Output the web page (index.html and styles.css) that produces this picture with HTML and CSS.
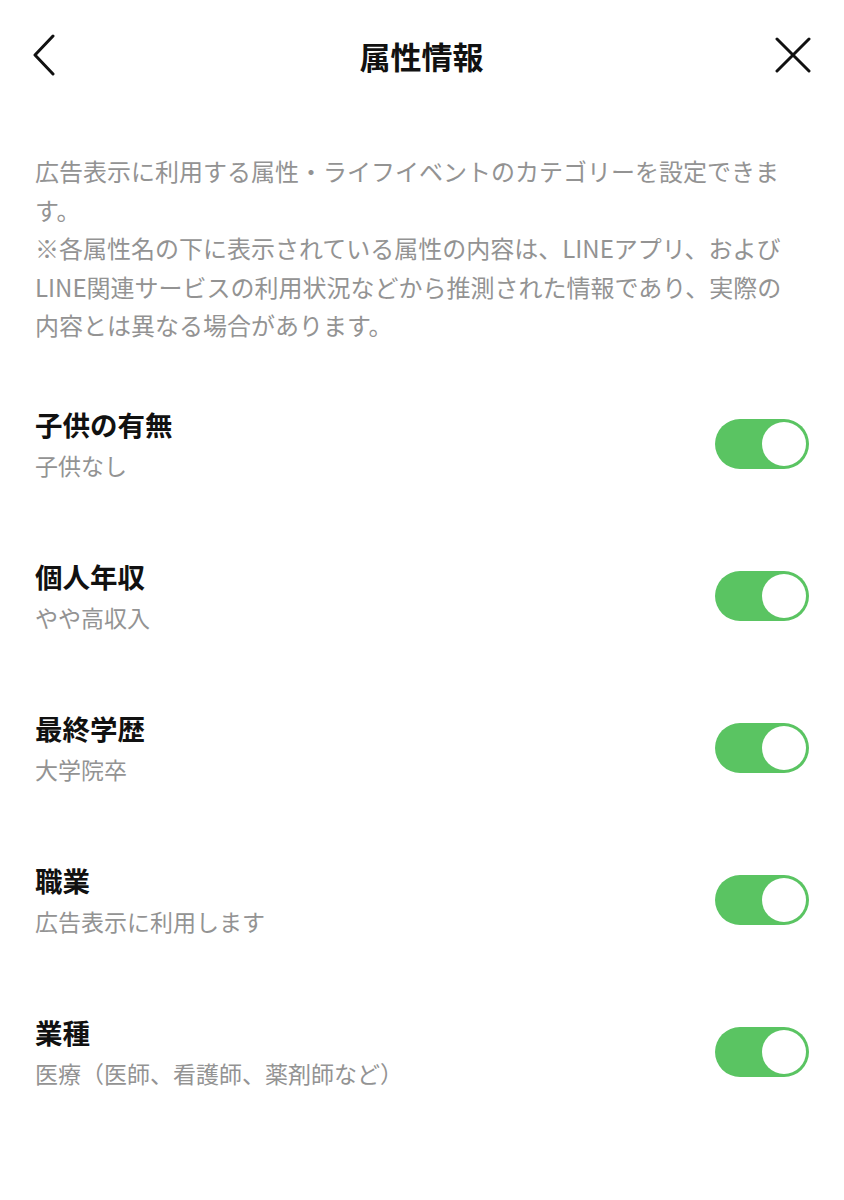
FILE: index.html
```html
<!DOCTYPE html>
<html lang="ja">
  <head>
    <meta charset="utf-8" />
    <title>属性情報</title>
    <meta name="viewport" content="width=device-width, initial-scale=1.0" />
    <link rel="stylesheet" href="styles.css">
  </head>
  <body>
    <header class="top-bar">
      <button class="icon-btn back" aria-label="戻る">
        <svg width="24" height="42" viewBox="0 0 24 42">
          <path d="M21 2 L3 21 L21 40" fill="none" stroke="#111" stroke-width="3" stroke-linecap="round" stroke-linejoin="round" />
        </svg>
      </button>
      <h1 class="title">属性情報</h1>
      <button class="icon-btn close" aria-label="閉じる">
        <svg width="36" height="36" viewBox="0 0 36 36">
          <path d="M2 2 L34 34 M34 2 L2 34" fill="none" stroke="#111" stroke-width="3" stroke-linecap="round" />
        </svg>
      </button>
    </header>

    <p class="description">
      広告表示に利用する属性・ライフイベントのカテゴリーを設定できます。<br>
      ※各属性名の下に表示されている属性の内容は、LINEアプリ、およびLINE関連サービスの利用状況などから推測された情報であり、実際の内容とは異なる場合があります。
    </p>

    <ul class="settings">
      <li class="setting">
        <div class="setting-text">
          <div class="setting-name">子供の有無</div>
          <div class="setting-value">子供なし</div>
        </div>
        <label class="switch"><input type="checkbox" checked><span class="slider"></span></label>
      </li>
      <li class="setting">
        <div class="setting-text">
          <div class="setting-name">個人年収</div>
          <div class="setting-value">やや高収入</div>
        </div>
        <label class="switch"><input type="checkbox" checked><span class="slider"></span></label>
      </li>
      <li class="setting">
        <div class="setting-text">
          <div class="setting-name">最終学歴</div>
          <div class="setting-value">大学院卒</div>
        </div>
        <label class="switch"><input type="checkbox" checked><span class="slider"></span></label>
      </li>
      <li class="setting">
        <div class="setting-text">
          <div class="setting-name">職業</div>
          <div class="setting-value">広告表示に利用します</div>
        </div>
        <label class="switch"><input type="checkbox" checked><span class="slider"></span></label>
      </li>
      <li class="setting">
        <div class="setting-text">
          <div class="setting-name">業種</div>
          <div class="setting-value">医療（医師、看護師、薬剤師など）</div>
        </div>
        <label class="switch"><input type="checkbox" checked><span class="slider"></span></label>
      </li>
    </ul>
  </body>
</html>
```

FILE: styles.css
```css
body {
  margin: 0;
  background: #fff;
  color: #111;
  font-family: "Noto Sans CJK JP", "Noto Sans", sans-serif;
}

.top-bar {
  height: 110px;
  padding: 0 33px 0 32px;
  display: grid;
  grid-template-columns: 1fr auto 1fr;
  align-items: center;
}

.icon-btn {
  padding: 0;
  border: none;
  background: none;
  display: flex;
  cursor: pointer;
}

.close {
  justify-self: end;
}

.title {
  margin: 0;
  font-size: 31px;
  font-weight: 700;
  line-height: 1;
}

.description {
  margin: 42px 54px 0 35px;
  font-size: 24px;
  line-height: 38.5px;
  color: #939393;
}

.settings {
  list-style: none;
  margin: 23px 0 0;
  padding: 0 35px;
}

.setting {
  padding: 38.1px 0;
  display: flex;
  align-items: center;
  justify-content: space-between;
}

.setting-name {
  font-size: 27.5px;
  font-weight: 700;
  line-height: 36px;
}

.setting-value {
  margin-top: 6px;
  font-size: 23px;
  line-height: 34px;
  color: #939393;
}

/* toggle switch */
.switch {
  position: relative;
  width: 94px;
  height: 50px;
  flex-shrink: 0;
}

.switch input {
  display: none;
}

.slider {
  position: absolute;
  inset: 0;
  border-radius: 25px;
  background: #5ac462;
}

.slider::before {
  content: "";
  position: absolute;
  top: 3px;
  right: 3px;
  width: 44px;
  height: 44px;
  border-radius: 50%;
  background: #fff;
}
```
